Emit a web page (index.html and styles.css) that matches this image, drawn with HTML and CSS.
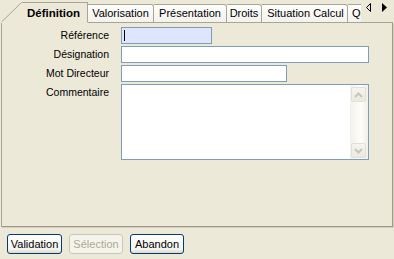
FILE: index.html
```html
<!DOCTYPE html>
<html lang="fr">
<head>
    <meta charset="UTF-8">
    <title>Fiche article</title>
    <link rel="stylesheet" href="styles.css">
</head>
<body>
    <div class="window">
        <div class="tabbar">
            <div class="tabs">
                <div class="tab active">
                    <svg class="slant" width="21" height="20" viewBox="0 0 21 20">
                        <line x1="0.5" y1="20" x2="20.5" y2="0.5" stroke="#a8a595" stroke-width="1"/>
                    </svg>
                    <span class="tab-label">Définition</span>
                </div>
                <div class="tab w-valo">Valorisation</div>
                <div class="tab w-pres">Présentation</div>
                <div class="tab w-droits">Droits</div>
                <div class="tab w-situ">Situation Calcul</div>
                <div class="tab w-qte">Quantités</div>
            </div>
            <div class="tab-arrows">
                <svg width="33" height="22" viewBox="0 0 33 22">
                    <polygon points="9.5,3.5 9.5,11.5 5.5,7.5" fill="none" stroke="#000" stroke-width="1"/>
                    <polygon points="21,3 21,12 26,7.5" fill="#000"/>
                </svg>
            </div>
        </div>

        <!-- Onglet Définition -->
        <div class="panel">
            <div class="form">
                <label class="lbl">Référence</label>
                <div class="field w-ref focused"><span class="caret"></span></div>

                <label class="lbl">Désignation</label>
                <div class="field w-full"></div>

                <label class="lbl">Mot Directeur</label>
                <div class="field w-mot"></div>

                <label class="lbl">Commentaire</label>
                <div class="field memo">
                    <div class="memo-text"></div>
                    <div class="scrollbar">
                        <div class="sb-btn">
                            <svg width="9" height="6" viewBox="0 0 9 6"><polyline points="1,5 4.5,1.5 8,5" fill="none" stroke="#c8c6ba" stroke-width="2"/></svg>
                        </div>
                        <div class="sb-track"></div>
                        <div class="sb-btn">
                            <svg width="9" height="6" viewBox="0 0 9 6"><polyline points="1,1 4.5,4.5 8,1" fill="none" stroke="#c8c6ba" stroke-width="2"/></svg>
                        </div>
                    </div>
                </div>
            </div>
        </div>

        <div class="buttons">
            <button class="btn w-btn1">Validation</button>
            <button class="btn" disabled>Sélection</button>
            <button class="btn">Abandon</button>
        </div>
    </div>
</body>
</html>
```

FILE: styles.css
```css
* {
    margin: 0;
    padding: 0;
    box-sizing: border-box;
}

body {
    background: #ece9d8;
    font-family: 'Liberation Sans', Arial, sans-serif;
    font-size: 11px;
    color: #000;
}

.window {
    width: 394px;
    height: 259px;
    padding-left: 1px;
}

/* tab strip */
.tabbar {
    display: flex;
    height: 23px;
}

.tabs {
    display: flex;
    align-items: flex-end;
    width: 360px;
    overflow: hidden;
}

.tab {
    flex: none;
    height: 19px;
    line-height: 17px;
    text-align: center;
    white-space: nowrap;
    border-top: 1px solid #a8a595;
    border-right: 1px solid #a8a595;
    border-bottom: 1px solid #a8a595;
    border-top-right-radius: 3px;
    background: linear-gradient(#fefefd, #f3f2ec);
}

.tab.active {
    display: flex;
    align-items: flex-end;
    width: 87px;
    height: 21px;
    border-top: none;
    border-bottom: 1px solid #ece9d8;
    border-top-right-radius: 0;
    background: none;
}

.slant {
    flex: none;
    display: block;
}

.tab-label {
    flex: 1;
    height: 20px;
    line-height: 20px;
    padding-left: 5px;
    text-align: left;
    font-weight: bold;
    font-size: 11.5px;
    border-top: 1px solid #a8a595;
}

.w-valo { width: 66px; }
.w-pres { width: 73px; }
.w-droits { width: 35px; }
.w-situ { width: 86px; padding-left: 2px; }
.w-qte { width: 70px; text-align: left; padding-left: 4px; }

.tab-arrows {
    width: 32px;
    border-bottom: 1px solid #a8a595;
}

.tab-arrows svg {
    display: block;
}

/* content panel */
.panel {
    width: 392px;
    height: 204px;
    border-left: 1px solid #a8a595;
    border-right: 1px solid #9d9a87;
    border-bottom: 1px solid #9d9a87;
    box-shadow: 1px 1px 0 #d2cfbf;
    padding-top: 4px;
}

.form {
    display: grid;
    grid-template-columns: 107px auto;
    column-gap: 12px;
    row-gap: 2px;
    justify-items: start;
}

.lbl {
    justify-self: end;
    align-self: start;
    line-height: 17px;
    font-size: 10.5px;
}

.field {
    height: 17px;
    background: #fff;
    border: 1px solid #7f9db9;
}

.field.focused {
    background: #dde6fd;
    padding: 2px 0 0 2px;
}

.caret {
    display: block;
    width: 1px;
    height: 11px;
    background: #000;
}

.w-ref { width: 91px; }
.w-full { width: 248px; }
.w-mot { width: 166px; }

.memo {
    display: flex;
    width: 248px;
    height: 76px;
}

.memo-text {
    flex: 1;
}

.scrollbar {
    display: flex;
    flex-direction: column;
    width: 18px;
    padding: 2px 2px 1px 1px;
    background: linear-gradient(90deg, #f3f1eb, #fdfdfb 60%, #f1efe8);
}

.sb-track {
    flex: 1;
}

.sb-btn {
    display: flex;
    justify-content: center;
    align-items: center;
    height: 15px;
    border: 1px solid #e3e1d6;
    border-radius: 2px;
    background: linear-gradient(#f5f4ef, #ebe9e0);
}

.sb-btn svg {
    display: block;
}

/* bottom buttons */
.buttons {
    display: flex;
    gap: 7px;
    padding: 7px 0 0 6px;
}

.btn {
    width: 54px;
    height: 20px;
    font-family: 'Liberation Sans', Arial, sans-serif;
    font-size: 11px;
    color: #000;
    border: 1px solid #003c74;
    border-radius: 3px;
    background: linear-gradient(#ffffff, #f4f3ee 80%, #dcd8c8);
}

.w-btn1 { width: 55px; }

.btn:disabled {
    color: #aca899;
    border-color: #c9c7ba;
    background: #f5f4ea;
}
```
